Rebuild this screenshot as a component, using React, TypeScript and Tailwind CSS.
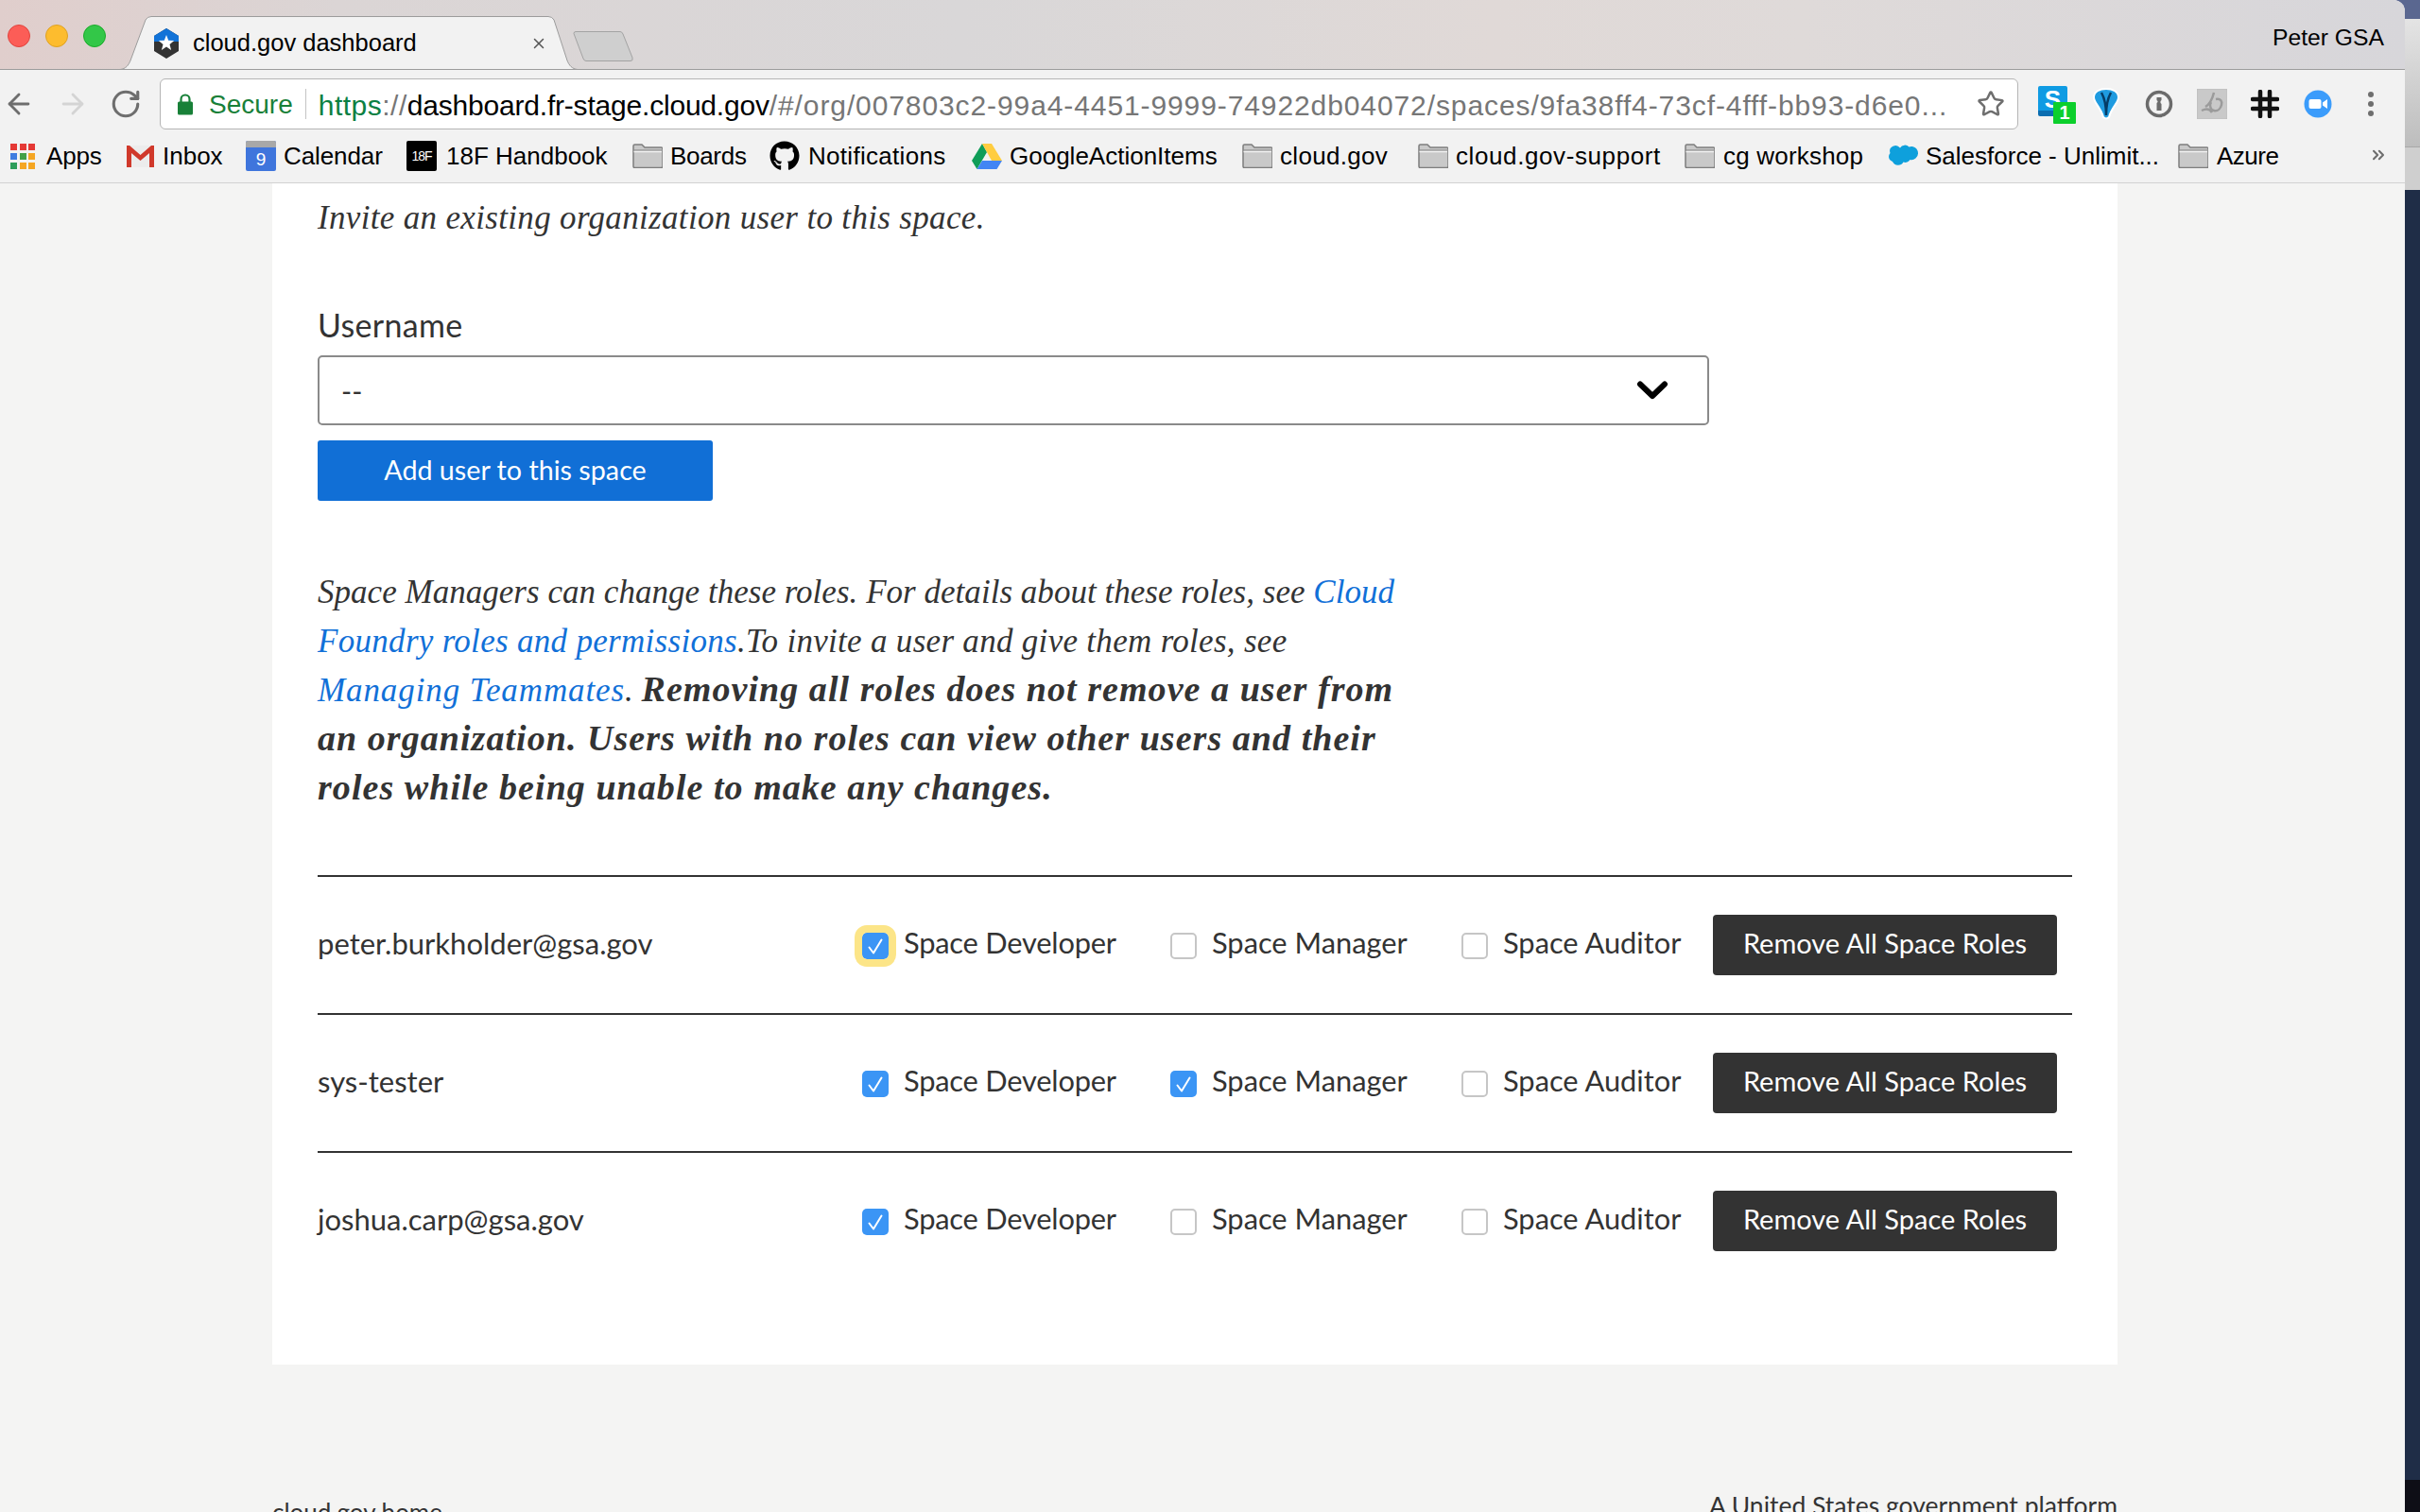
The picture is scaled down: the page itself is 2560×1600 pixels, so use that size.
import React from "react";
import { ArrowLeft, ArrowRight, RotateCw, Star, ChevronsRight, X } from "lucide-react";
import { FaGithub } from "react-icons/fa";

const Folder = () => (
  <svg width="32" height="26" viewBox="0 0 32 26" className="shrink-0">
    <path d="M1 2.500A1.500 1.500 0 0 1 2.500 1H10l3 3h17.500A1.500 1.500 0 0 1 32 5.500V24a1.500 1.500 0 0 1-1.500 1.500H2.500A1.500 1.500 0 0 1 1 24Z" fill="#c9c9c9" stroke="#7e7e7e" strokeWidth="1.500" />
    <path d="M1.500 7h29.500" stroke="#7e7e7e" strokeWidth="1" />
    <path d="M1.500 8.500h29.500" stroke="#f2f2f2" strokeWidth="1.500" />
  </svg>
);

const AppsIcon = () => (
  <div className="grid grid-cols-3 gap-[3px] w-[26px] shrink-0">
    <i className="w-[7px] h-[7px] bg-[#e53935]" />
    <i className="w-[7px] h-[7px] bg-[#e53935]" />
    <i className="w-[7px] h-[7px] bg-[#e53935]" />
    <i className="w-[7px] h-[7px] bg-[#3f7de0]" />
    <i className="w-[7px] h-[7px] bg-[#43a047]" />
    <i className="w-[7px] h-[7px] bg-[#f5a623]" />
    <i className="w-[7px] h-[7px] bg-[#2e9e5b]" />
    <i className="w-[7px] h-[7px] bg-[#f5a623]" />
    <i className="w-[7px] h-[7px] bg-[#f5a623]" />
  </div>
);

const GmailIcon = () => (
  <svg width="29" height="24" viewBox="0 0 29 24" className="shrink-0">
    <path d="M0 1h29v23H0Z" fill="#ececec" />
    <path d="M0 1 14.500 13 29 1v4L14.500 17 0 5Z" fill="#d9d9d9" />
    <path d="M0 1h3l11.500 10L26 1h3v23h-5V9l-9.500 8L5 9v15H0Z" fill="#d0392b" />
  </svg>
);

const CalendarIcon = () => (
  <div className="w-[32px] h-[32px] shrink-0 rounded-[2px] bg-[#3f75dc] flex flex-col overflow-hidden">
    <div className="h-[7px] bg-[#a8a8a8]" />
    <div className="flex-1 flex items-center justify-center text-white text-[19px] leading-none font-['Liberation_Sans']">9</div>
  </div>
);

const HandbookIcon = () => (
  <div className="w-[32px] h-[32px] shrink-0 rounded-[2px] bg-black flex items-center justify-center text-white text-[14px] leading-none tracking-[-1px] font-['Liberation_Sans']">18F</div>
);

const DriveIcon = () => (
  <svg width="32" height="27" viewBox="0 0 32 27" className="shrink-0">
    <path d="M11 0 0 18l5.500 9L16 9Z" fill="#0f9d58" />
    <path d="M11 0h10l11 18H21Z" fill="#ffcd40" />
    <path d="M5.500 27h21L32 18H11Z" fill="#4285f4" />
  </svg>
);

const SalesforceIcon = () => (
  <svg width="32" height="24" viewBox="0 0 32 24" className="shrink-0">
    <path d="M13 3.500a6 6 0 0 1 9.500-1 7 7 0 0 1 9.500 6.500 7 7 0 0 1-8.500 7 5.500 5.500 0 0 1-7 2.500 6.500 6.500 0 0 1-11.500-.5A5.500 5.500 0 0 1 2.500 9 6 6 0 0 1 13 3.500Z" fill="#0ea0dc" />
  </svg>
);

const Bookmark = ({ className, icon, label, gap }: { className: string; icon: React.ReactNode; label: string; gap: string }) => (
  <div className={`flex items-center shrink-0 ${className} ${gap}`}>
    {icon}
    <span className="whitespace-nowrap">{label}</span>
  </div>
);

const Check = () => (
  <svg width="16" height="17" viewBox="0 0 16 17">
    <path d="M1.500 9.500 6 15.500 14.500 1.500" fill="none" stroke="white" strokeWidth="2" strokeLinecap="round" strokeLinejoin="round" />
  </svg>
);

const Box = ({ checked, focused }: { checked?: boolean; focused?: boolean }) => {
  if (checked) {
    return (
      <span className={`mt-[2px] w-[28px] h-[28px] shrink-0 rounded-[5px] bg-[#3b95f5] flex items-center justify-center ${focused ? "outline-[8px] outline-solid outline-[#fce588]" : ""}`}>
        <Check />
      </span>
    );
  }
  return <span className="mt-[2px] w-[28px] h-[28px] shrink-0 rounded-[5px] bg-white border-2 border-[#c6c6c6]" />;
};

const Role = ({ className, label, checked, focused }: { className: string; label: string; checked?: boolean; focused?: boolean }) => (
  <label className={`flex items-center gap-[16px] shrink-0 ${className}`}>
    <Box checked={checked} focused={focused} />
    <span className="whitespace-nowrap -mt-[4px]">{label}</span>
  </label>
);

const UserRow = ({ name, dev, mgr, focused }: { name: string; dev?: boolean; mgr?: boolean; focused?: boolean }) => (
  <div className="h-[146px] border-t-2 border-[#333333] flex items-center text-[30.800px] text-[#333333]">
    <div className="w-[576px] shrink-0 -mt-[4px] text-[31px]">{name}</div>
    <Role className="w-[326px] tracking-[-0.200px]" label="Space Developer" checked={dev} focused={focused} />
    <Role className="w-[308px]" label="Space Manager" checked={mgr} />
    <Role className="w-[266px]" label="Space Auditor" />
    <button className="w-[364px] h-[64px] pb-[4px] rounded-[4px] bg-[#333333] text-white text-[29px] shrink-0">Remove All Space Roles</button>
  </div>
);

export default function App() {
  return (
    <div className="w-[2560px] h-[1600px] overflow-hidden flex bg-[#5a6790]">
      <div className="w-[2544px] h-[1600px] shrink-0 flex flex-col overflow-hidden rounded-tr-[12px] bg-[#f4f4f3] font-['Liberation_Sans',sans-serif]">
        {/* title bar */}
        <div className="h-[74px] shrink-0 flex border-b border-[#9c9c9c] bg-[linear-gradient(90deg,#e0cecc_0%,#dbd5d5_14%,#d9d7d8_40%,#e0d9d7_62%,#dfdad9_75%,#d7d6da_100%)]">
          <div className="w-[127px] shrink-0 pl-[8px] pt-[26px] flex gap-[16px]">
            <span className="w-[24px] h-[24px] rounded-full bg-[#fc5d57] border border-[#e0443e]" />
            <span className="w-[24px] h-[24px] rounded-full bg-[#fdbc2e] border border-[#dea123]" />
            <span className="w-[24px] h-[24px] rounded-full bg-[#33c748] border border-[#1aab29]" />
          </div>
          <div className="relative w-[484px] h-[57px] mt-[17px] shrink-0 flex items-center pl-[36px] text-[25.500px] text-black">
            <svg width="484" height="57" viewBox="0 0 484 57" className="absolute left-0 top-0">
              <path d="M0 56.500C6 56 9 52 11 47L27 4Q29 0.500 33 0.500H453Q457 0.500 459 4L473 47C475 52 478 56 484 56.500Z" fill="#f2f2f2" stroke="#9c9c9c" strokeWidth="1" />
            </svg>
            <svg width="26" height="32" viewBox="0 0 26 32" className="relative shrink-0">
              <path d="M13 0 26 8v16l-13 8L0 24V8Z" fill="#333333" />
              <path d="M13 0 26 8v6H0V8Z" fill="#1273d8" />
              <path d="m13 7 2.200 5.800 6 .3-4.700 3.800 1.600 6L13 19.600l-5.100 3.300 1.600-6-4.700-3.800 6-.3Z" fill="white" />
            </svg>
            <span className="relative ml-[15px] whitespace-nowrap -mt-[1px]">cloud.gov dashboard</span>
            <X className="absolute left-[434px] top-[20px] text-[#555555]" size={18} strokeWidth={2} />
          </div>
          <svg width="64" height="32" viewBox="0 0 64 32" className="shrink-0 mt-[33px] -ml-[5px]">
            <path d="M1 2.500Q1 .500 3 .500H50Q52 .500 53 3L63 28Q64 31.500 61 31.500H14Q12 31.500 11 29Z" fill="#cfcfcf" stroke="#a3a3a3" strokeWidth="1" />
          </svg>
          <div className="ml-auto pr-[22px] pt-[26px] text-[24.700px] leading-[28px] text-black">Peter GSA</div>
        </div>

        {/* toolbar */}
        <div className="h-[72px] shrink-0 flex items-center bg-[#f2f2f2]">
          <div className="w-[169px] shrink-0 flex items-center">
            <ArrowLeft className="ml-[3px] text-[#6e6e6e]" size={34} strokeWidth={2} />
            <ArrowRight className="ml-[23px] text-[#d4d4d4]" size={34} strokeWidth={2} />
            <RotateCw className="ml-[22px] text-[#6e6e6e]" size={34} strokeWidth={2.200} />
          </div>
          <div className="w-[1966px] h-[54px] shrink-0 flex items-center bg-white border border-[#b5b5b5] rounded-[6px] whitespace-nowrap overflow-hidden">
            <svg width="16" height="24" viewBox="0 0 16 24" className="ml-[18px] shrink-0">
              <path d="M3.500 10V7a4.500 4.500 0 0 1 9 0v3" fill="none" stroke="#188038" strokeWidth="2.200" />
              <rect x="0" y="9.500" width="16" height="14" rx="1.500" fill="#188038" />
            </svg>
            <span className="ml-[17px] pt-[2px] text-[28px] text-[#188038]">Secure</span>
            <span className="ml-[13px] w-px h-[32px] bg-[#c4c4c4] shrink-0" />
            <span className="ml-[13px] pt-[2px] w-[1725px] overflow-hidden text-[30px]">
              <span className="text-[#0b8043] tracking-[0.500px]">https</span>
              <span className="text-[#767676] tracking-[0.500px]">://</span>
              <span className="text-black tracking-[-0.200px]">dashboard.fr-stage.cloud.gov</span>
              <span className="text-[#767676] tracking-[0.900px]">/#/org/007803c2-99a4-4451-9999-74922db04072/spaces/9fa38ff4-73cf-4fff-bb93-d6e0...</span>
            </span>
            <Star className="ml-[29px] shrink-0 text-[#6e6e6e]" size={30} strokeWidth={2} />
          </div>
          <div className="pl-[9px] flex items-center">
            <div className="relative w-[56px] h-[40px] flex items-center justify-center">
              <div className="w-[31px] h-[32px] -mt-[7px] -ml-[1px] rounded-[2px] bg-[#0f9be3] text-white text-[26px] font-bold leading-[28px] text-center border-b-[6px] border-[#0b6db0]">S</div>
              <span className="absolute left-[28px] top-[18px] w-[24px] h-[23px] rounded-[1px] bg-[#0ccf2c] text-white text-[20px] font-bold leading-[23px] text-center">1</span>
            </div>
            <div className="w-[56px] flex justify-center">
              <svg width="30" height="34" viewBox="0 0 30 34">
                <path d="M2 10C2 4 8 1 15 1s13 3 13 9c0 6-7 10-10 21q-3 3-6 0C9 20 2 16 2 10Z" fill="#1f9be0" stroke="white" strokeWidth="2" />
                <path d="M10 5q5 9 5 24 0-15 5-24" fill="none" stroke="#053c66" strokeWidth="2.500" />
              </svg>
            </div>
            <div className="w-[56px] flex justify-center">
              <svg width="30" height="30" viewBox="0 0 30 30">
                <circle cx="15" cy="15" r="12.500" fill="none" stroke="#6b6b6b" strokeWidth="3.500" />
                <path d="M12.500 8h5v3l-1 1v2l1 1v7h-5V14l1-1v-1l-1-1Z" fill="#6b6b6b" />
              </svg>
            </div>
            <div className="w-[56px] flex justify-center">
              <svg width="32" height="32" viewBox="0 0 32 32">
                <rect width="32" height="32" fill="#c9c9c9" stroke="#bcbcbc" />
                <path d="M18 4c-2 8-4 12-9 15m-4 4c4-2 8-3 11 2m4-14c5-1 7 2 6 6s-4 7-8 6-5-6-3-9" fill="none" stroke="#9b9b9b" strokeWidth="2.500" />
              </svg>
            </div>
            <div className="w-[56px] flex justify-center">
              <svg width="30" height="30" viewBox="0 0 30 30">
                <path d="M10 2v26M20 2v26M2 10h26M2 20h26" stroke="#111111" strokeWidth="4.500" strokeLinecap="round" />
              </svg>
            </div>
            <div className="w-[56px] flex justify-center">
              <svg width="30" height="30" viewBox="0 0 30 30">
                <circle cx="15" cy="15" r="14.500" fill="#3b9cfb" />
                <rect x="5.500" y="10" width="13" height="10" rx="2" fill="white" />
                <path d="m20 13.500 5-3.500v10l-5-3.500Z" fill="white" />
              </svg>
            </div>
            <div className="w-[56px] flex flex-col items-center gap-[4px]">
              <span className="w-[6px] h-[6px] rounded-full bg-[#6e6e6e]" />
              <span className="w-[6px] h-[6px] rounded-full bg-[#6e6e6e]" />
              <span className="w-[6px] h-[6px] rounded-full bg-[#6e6e6e]" />
            </div>
          </div>
        </div>

        {/* bookmarks */}
        <div className="h-[48px] shrink-0 flex items-center pb-[9px] pl-[11px] bg-[#f2f2f2] border-b border-[#d2d2d2] text-[26px] text-black">
          <Bookmark className="w-[123px] tracking-[-0.200px]" gap="gap-[12px]" icon={<AppsIcon />} label="Apps" />
          <Bookmark className="w-[126px]" gap="gap-[9px]" icon={<GmailIcon />} label="Inbox" />
          <Bookmark className="w-[170px] tracking-[-0.100px]" gap="gap-[8px]" icon={<CalendarIcon />} label="Calendar" />
          <Bookmark className="w-[239px]" gap="gap-[10px]" icon={<HandbookIcon />} label="18F Handbook" />
          <Bookmark className="w-[145px] tracking-[-0.300px]" gap="gap-[8px]" icon={<Folder />} label="Boards" />
          <Bookmark className="w-[214px] tracking-[0.300px]" gap="gap-[9px]" icon={<FaGithub size={32} className="shrink-0" />} label="Notifications" />
          <Bookmark className="w-[286px]" gap="gap-[8px]" icon={<DriveIcon />} label="GoogleActionItems" />
          <Bookmark className="w-[186px] tracking-[0.300px]" gap="gap-[8px]" icon={<Folder />} label="cloud.gov" />
          <Bookmark className="w-[282px] tracking-[0.600px]" gap="gap-[8px]" icon={<Folder />} label="cloud.gov-support" />
          <Bookmark className="w-[215px] tracking-[0.200px]" gap="gap-[9px]" icon={<Folder />} label="cg workshop" />
          <Bookmark className="w-[307px]" gap="gap-[8px]" icon={<SalesforceIcon />} label="Salesforce - Unlimit..." />
          <Bookmark className="w-[202px] tracking-[-0.500px]" gap="gap-[9px]" icon={<Folder />} label="Azure" />
          <ChevronsRight className="shrink-0 -mt-[2px] text-[#6e6e6e]" size={20} strokeWidth={2.500} />
        </div>

        {/* page */}
        <div className="flex-1 min-h-0 overflow-hidden bg-[#f4f4f3]">
          <div className="ml-[288px] w-[1952px] h-[1250px] bg-white px-[48px] pt-[11px] text-[#333333] font-['Lato',sans-serif]">
            <p className="font-['Liberation_Serif',serif] italic text-[35px] leading-[52px] tracking-[0.330px]">Invite an existing organization user to this space.</p>
            <div className="mt-[67px] text-[34px] leading-[40px] tracking-[0.300px]">Username</div>
            <div className="mt-[12px] w-[1472px] h-[74px] border-2 border-[#8a8a8a] rounded-[5px] flex items-center justify-between pl-[23px] pr-[41px] text-[30px]">
              <span>--</span>
              <svg width="34" height="22" viewBox="0 0 34 22">
                <path d="M4 4.500 17 17 30 4.500" fill="none" stroke="black" strokeWidth="6" strokeLinecap="round" strokeLinejoin="round" />
              </svg>
            </div>
            <button className="block mt-[16px] w-[418px] h-[64px] rounded-[3px] bg-[#116fd6] text-white text-[28.700px]">Add user to this space</button>
            <p className="mt-[71px] font-['Liberation_Serif',serif] italic text-[35px] leading-[52px]">
              <span className="tracking-[0.030px]">Space Managers can change these roles. For details about these roles, see <a className="text-[#1170d8]">Cloud</a></span><br />
              <span className="tracking-[0.300px]"><a className="text-[#1170d8]">Foundry roles and permissions</a>.To invite a user and give them roles, see</span><br />
              <a className="text-[#1170d8] tracking-[0.900px]">Managing Teammates</a>. <strong className="font-bold text-[38px] leading-[44px] tracking-[1.050px]">Removing all roles does not remove a user from<br />
              an organization. Users with no roles can view other users and their<br />
              roles while being unable to make any changes.</strong>
            </p>
            <div className="mt-[65px]">
              <UserRow name="peter.burkholder@gsa.gov" dev focused />
              <UserRow name="sys-tester" dev mgr />
              <UserRow name="joshua.carp@gsa.gov" dev />
            </div>
          </div>
          <div className="ml-[288px] w-[1952px] flex justify-between items-start text-[#333333] text-[26px] leading-[30px] font-['Lato',sans-serif]">
            <span className="mt-[141px]">cloud.gov home</span>
            <span className="mt-[134px] text-[26.500px]">A United States government platform</span>
          </div>
        </div>
      </div>

      {/* desktop behind the window */}
      <div className="w-[16px] h-[1600px] shrink-0 flex flex-col bg-[#1f2d47]">
        <div className="h-[20px] shrink-0 bg-[#5a6790]" />
        <div className="h-[135px] shrink-0 bg-[linear-gradient(180deg,#e4e4e4,#bdbdbd)]" />
        <div className="h-[46px] shrink-0 border-t border-[#a8a8a8] bg-[#cfcfcf]" />
        <div className="flex-1" />
        <div className="h-[34px] shrink-0 bg-[#0e0e16]" />
      </div>
    </div>
  );
}
